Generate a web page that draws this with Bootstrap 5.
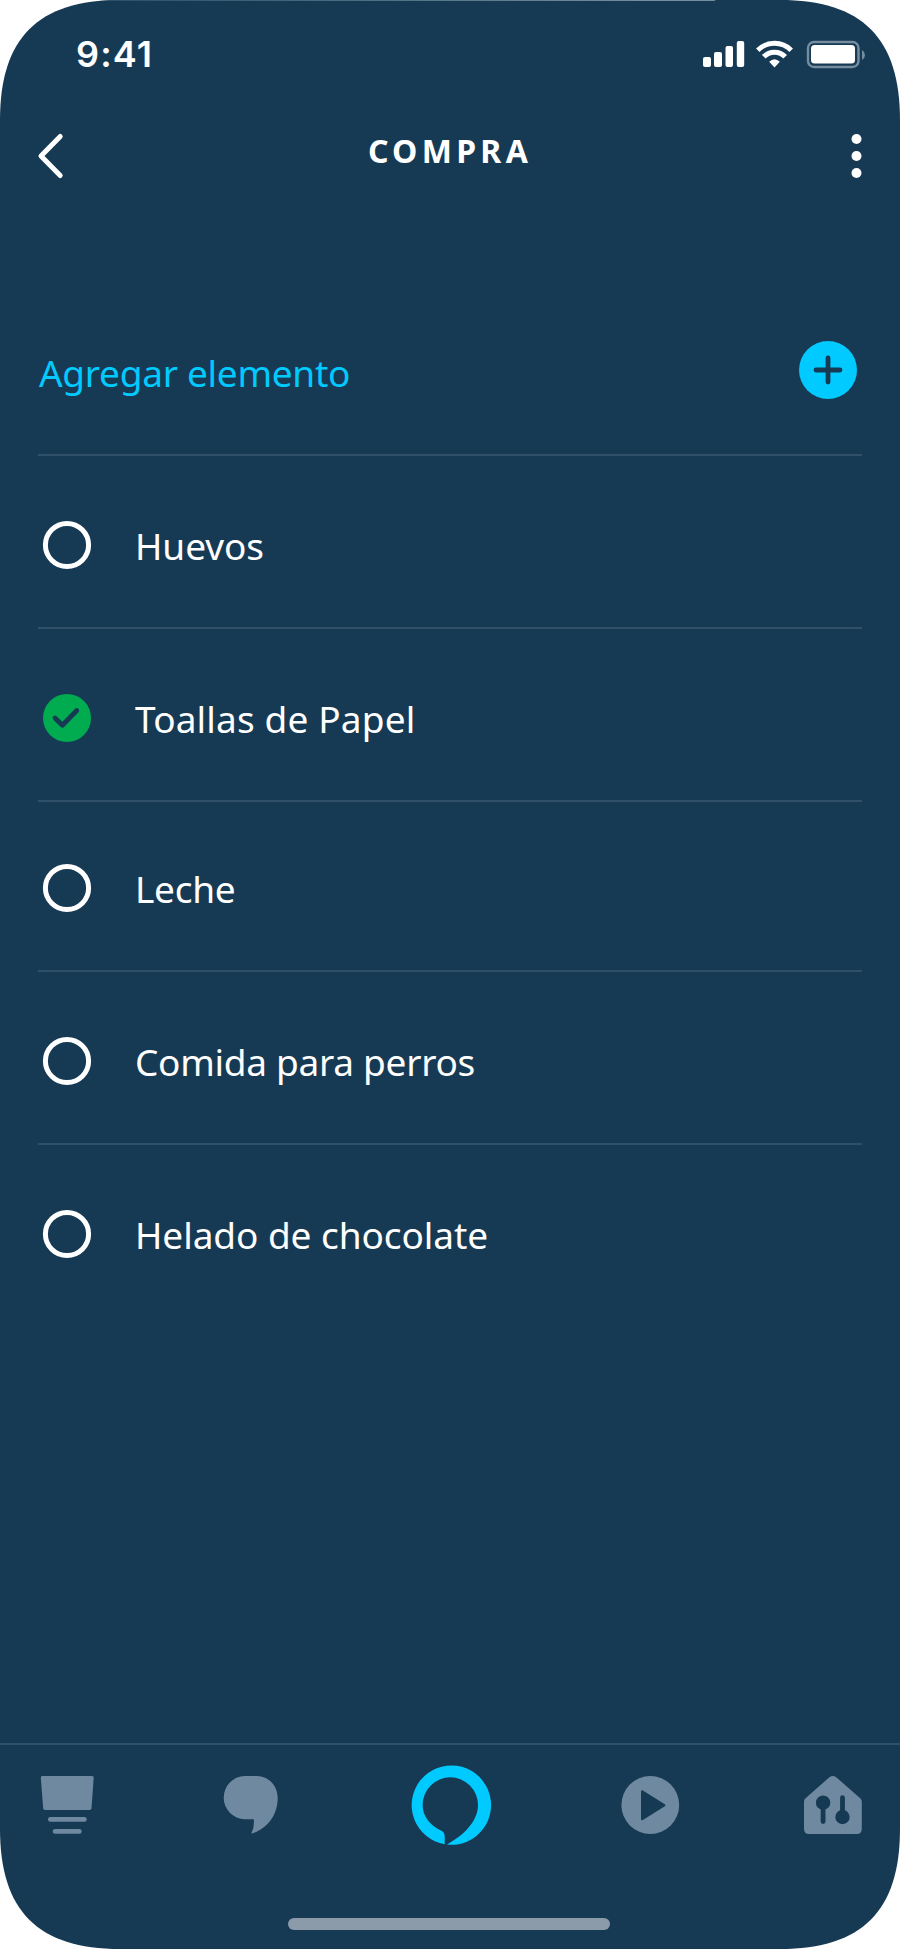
<!DOCTYPE html>
<html lang="es">
<head>
<meta charset="utf-8">
<meta name="viewport" content="width=device-width, initial-scale=1">
<title>Compra</title>
<link href="https://cdn.jsdelivr.net/npm/bootstrap@5.3.0/dist/css/bootstrap.min.css" rel="stylesheet">
<style>
  :root { --navy: #173a54; --cyan: #00caff; --rule: #304f68; --muted-icon: #6f89a0; }
  body { background: #fff; font-family: "Noto Sans", "Open Sans", sans-serif; }
  svg { display: block; flex: none; overflow: visible; }
  .phone {
    width: 900px; height: 1949px; background: var(--navy); color: #fff;
    clip-path: path("M0 120C0 38 38 0 120 0H780C862 0 900 38 900 120V1829C900 1911 862 1949 780 1949H120C38 1949 0 1911 0 1829Z");
  }
  .top-edge { height: 1px; background: linear-gradient(90deg, #2a5069 100px, #7590a0 660px, #7590a0 714px, transparent 716px); }
  .status { height: 108px; padding: 0 35px 0 76px; }
  .clock { font: 600 36px/107px Inter, sans-serif; letter-spacing: 1.1px; }
  .title-bar { height: 94px; padding: 0 38px; }
  .title-bar h1 { font-size: 32px; font-weight: 700; line-height: 84px; letter-spacing: 4.3px; padding-right: 16px; }
  .edge-icon { margin-top: 24px; }
  .add-row { height: 253px; padding: 138px 5px 0 1px; border-bottom: 2px solid var(--rule); color: var(--cyan); }
  .add-label { font-size: 37px; line-height: 63px; letter-spacing: -.28px; }
  .items { padding: 0 38px; }
  .item { height: 173px; padding: 65px 0 0 5px; gap: 44px; font-size: 37px; line-height: 49px; letter-spacing: -.06px; }
  .ruled { border-bottom: 2px solid var(--rule); }
  .item-short { height: 170px; padding-top: 62px; }
  .snug { letter-spacing: -.28px; }
  .loose { letter-spacing: .16px; }
  .tabs { height: 206px; border-top: 2px solid var(--rule); padding: 20px 38px 19px; color: var(--muted-icon); }
  .tab-grid { display: grid; grid-template-columns: 182.5px 189.5px 211px 183px 58px; height: 80px; align-items: center; }
  .home-bar { width: 322px; height: 12px; background: #8b9ba9; margin-right: 2px; }
</style>
</head>
<body>
<div class="phone d-flex flex-column">
  <div class="top-edge"></div>
  <header>
    <div class="status d-flex justify-content-between">
      <div class="clock">9:41</div>
      <svg width="162" height="28" viewBox="703 41 162 28" class="my-auto" fill="#fff">
        <rect x="703" y="57" width="8" height="10" rx="2"/>
        <rect x="714" y="52" width="8" height="15" rx="2"/>
        <rect x="725.5" y="46" width="7.5" height="21" rx="2"/>
        <rect x="736.8" y="41" width="7.4" height="26" rx="2"/>
        <g transform="translate(756 41)">
          <path d="M1.8 9.2A23.7 23.7 0 0 1 35.2 9.2M7.8 15.8A14.8 14.8 0 0 1 29.2 15.8" fill="none" stroke="#fff" stroke-width="5"/>
          <path d="M13.2 20.8Q18.5 15.8 23.8 20.8L18.5 26.4Z"/>
        </g>
        <rect x="808" y="42" width="50.5" height="25" rx="6" fill="none" stroke="#768da0" stroke-width="2.4"/>
        <rect x="811" y="45" width="44" height="18.5" rx="3.5"/>
        <path d="M862 50Q865 52 865 55T862 60Z" fill="#768da0"/>
      </svg>
    </div>
    <div class="title-bar d-flex justify-content-between align-items-start">
      <svg class="edge-icon" width="26" height="46" viewBox="38 133 26 46" fill="none" stroke="#fff" stroke-width="5" stroke-linecap="round" stroke-linejoin="round"><path d="M60.2 136.5L41 156L60.2 175.5"/></svg>
      <h1 class="m-0">COMPRA</h1>
      <svg class="edge-icon" width="10" height="46" viewBox="852.5 133 10 46" fill="#fff"><circle cx="857" cy="139" r="5"/><circle cx="857" cy="156" r="5"/><circle cx="857" cy="173" r="5"/></svg>
    </div>
  </header>

  <main class="items flex-grow-1">
    <div class="add-row d-flex justify-content-between align-items-start">
      <span class="add-label">Agregar elemento</span>
      <svg width="58" height="58" viewBox="0 0 58 58"><circle cx="29" cy="29" r="29" fill="#00caff"/><path d="M29 17V41M17 29H41" stroke="#173a54" stroke-width="4.8" stroke-linecap="round"/></svg>
    </div>
    <ul class="list-unstyled m-0">
      <li class="item ruled d-flex align-items-start">
        <svg width="48" height="48"><circle cx="24" cy="24" r="21.6" fill="none" stroke="#fff" stroke-width="5"/></svg><span>Huevos</span>
      </li>
      <li class="item ruled d-flex align-items-start">
        <svg width="48" height="48"><circle cx="24" cy="24" r="24" fill="#00ac4f"/><path d="M12 24L19.4 31.2L33.8 16.5" fill="none" stroke="#173a54" stroke-width="4.8" stroke-linecap="round" stroke-linejoin="round"/></svg><span class="loose">Toallas de Papel</span>
      </li>
      <li class="item item-short ruled d-flex align-items-start">
        <svg width="48" height="48"><circle cx="24" cy="24" r="21.6" fill="none" stroke="#fff" stroke-width="5"/></svg><span class="snug">Leche</span>
      </li>
      <li class="item ruled d-flex align-items-start">
        <svg width="48" height="48"><circle cx="24" cy="24" r="21.6" fill="none" stroke="#fff" stroke-width="5"/></svg><span class="snug">Comida para perros</span>
      </li>
      <li class="item d-flex align-items-start">
        <svg width="48" height="48"><circle cx="24" cy="24" r="21.6" fill="none" stroke="#fff" stroke-width="5"/></svg><span>Helado de chocolate</span>
      </li>
    </ul>
  </main>

  <footer class="tabs d-flex flex-column justify-content-between">
    <nav class="tab-grid">
      <svg width="58" height="58" fill="currentColor">
        <path d="M4.4 0H54Q55.8 0 55.7 1.8L53.5 32.2Q53.3 34 51.6 34H7Q5.4 34 5.2 32.2L2.8 1.8Q2.7 0 4.4 0Z"/>
        <rect x="10" y="41" width="38.7" height="4.8" rx="2.4"/><rect x="14.7" y="53" width="29" height="4.8" rx="2.4"/>
      </svg>
      <svg width="58" height="58" fill="currentColor"><path d="M23.7 0H35C48 0 56.7 10 56.7 22C56.7 38 47.5 52 31.2 57.5Q30 57.6 30.7 56.5Q33.5 51 32.8 43.3H23.7A21.66 21.66 0 0 1 23.7 0Z"/></svg>
      <svg width="80" height="80" fill="#00caff"><path d="M34.7 79.3A39.7 39.7 0 1 1 36.8 79.6C47 74 68 60 68 40A27.7 27.7 0 0 0 12.6 40C12.6 51 20 60.5 30.5 65.2Q34.7 67 34.7 71Z"/></svg>
      <svg width="58" height="58"><circle cx="29.3" cy="29" r="28.9" fill="currentColor"/><path d="M21.2 15.4V43.1L43.2 29.2Z" fill="#173a54" stroke="#173a54" stroke-width="2.4" stroke-linejoin="round"/></svg>
      <svg width="58" height="58">
        <path d="M0 25.5Q0 23.5 1.6 22.2L25.4 1.2Q28.8 -1.2 32.2 1.2L56.2 22.2Q57.8 23.5 57.8 25.5V53Q57.8 58 52.8 58H5Q0 58 0 53Z" fill="currentColor"/>
        <g fill="#173a54" stroke="#173a54" stroke-width="4.8" stroke-linecap="round"><circle cx="19.1" cy="26.7" r="4.8"/><path d="M19.1 26.7V45.6"/><circle cx="38.5" cy="41" r="4.8"/><path d="M38.5 41V21.7"/></g>
      </svg>
    </nav>
    <div class="home-bar rounded-pill align-self-center"></div>
  </footer>
</div>
<script src="https://cdn.jsdelivr.net/npm/bootstrap@5.3.0/dist/js/bootstrap.bundle.min.js"></script>
</body>
</html>
